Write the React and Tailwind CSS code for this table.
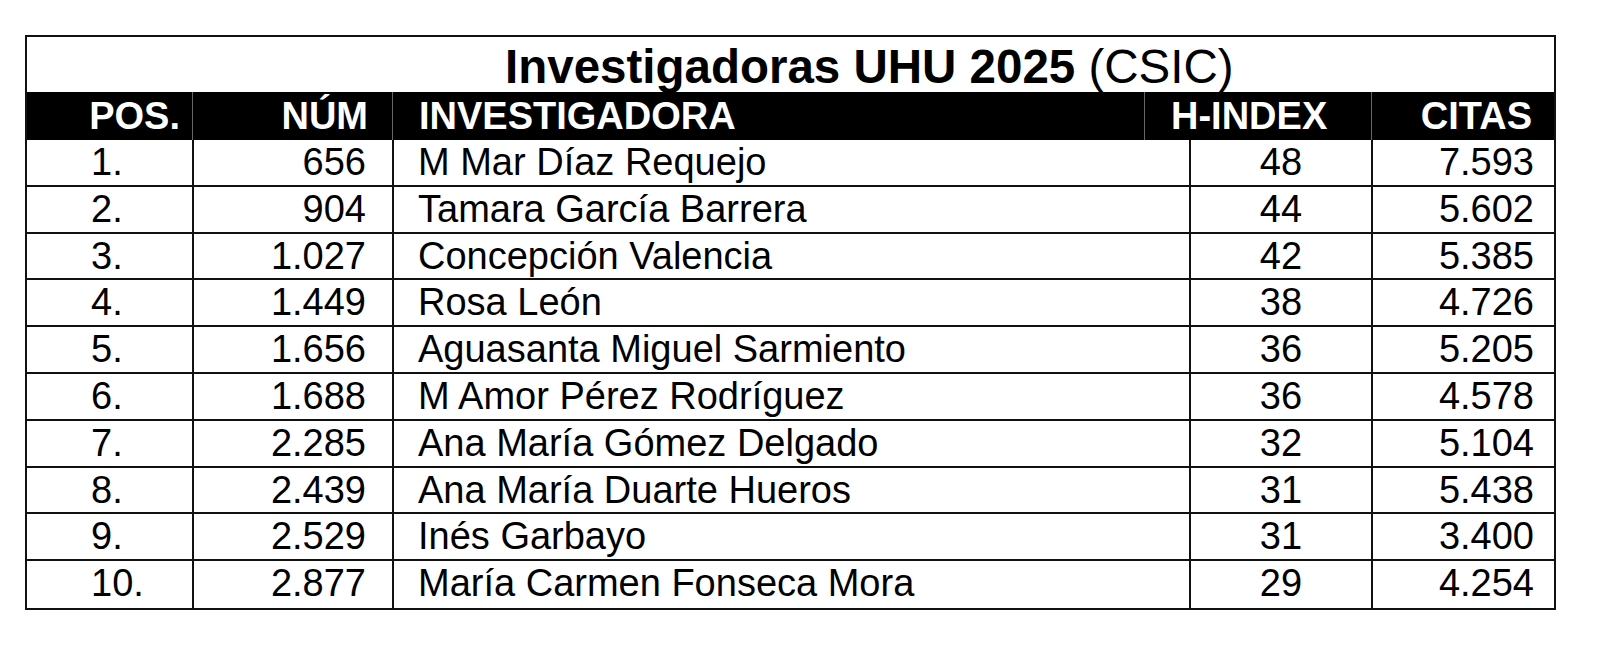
const rows = [
  ['1.', '656', 'M Mar Díaz Requejo', '48', '7.593'],
  ['2.', '904', 'Tamara García Barrera', '44', '5.602'],
  ['3.', '1.027', 'Concepción Valencia', '42', '5.385'],
  ['4.', '1.449', 'Rosa León', '38', '4.726'],
  ['5.', '1.656', 'Aguasanta Miguel Sarmiento', '36', '5.205'],
  ['6.', '1.688', 'M Amor Pérez Rodríguez', '36', '4.578'],
  ['7.', '2.285', 'Ana María Gómez Delgado', '32', '5.104'],
  ['8.', '2.439', 'Ana María Duarte Hueros', '31', '5.438'],
  ['9.', '2.529', 'Inés Garbayo', '31', '3.400'],
  ['10.', '2.877', 'María Carmen Fonseca Mora', '29', '4.254'],
];

function App() {
  return (
    <div className="h-[660px] w-[1600px] bg-white pl-[25px] pt-[35px] font-['Liberation_Sans',Arial,sans-serif] text-black">
      <div className="w-[1531px] border-2 border-[#111]">
        <div className="h-[55px] whitespace-nowrap pl-[478px] pt-[6px] text-[47.5px] leading-[47px]">
          <span className="font-bold">Investigadoras UHU 2025</span> (CSIC)
        </div>
        <div className="grid h-[48px] grid-cols-[165px_200px_752px_227px_1fr] bg-black text-[38px] font-bold leading-[48px] text-white">
          <div className="pr-[12px] text-right">POS.</div>
          <div className="border-l border-[#666] pr-[24px] text-right">NÚM</div>
          <div className="border-l border-[#666] pl-[26px]">INVESTIGADORA</div>
          <div className="border-l border-[#666] pl-[26px]">H-INDEX</div>
          <div className="border-l border-[#666] pr-[22px] text-right">CITAS</div>
        </div>
        {rows.map((r, i) => (
          <div
            key={r[0]}
            className={`grid h-[46.8px] grid-cols-[165px_200px_797px_182px_1fr] text-[38px] leading-[45px] ${
              i < rows.length - 1 ? 'border-b-2 border-[#111]' : ''
            }`}
          >
            <div className="pl-[64px]">{r[0]}</div>
            <div className="border-l-2 border-[#111] pr-[26px] text-right">{r[1]}</div>
            <div className="border-l-2 border-[#111] pl-[24px]">{r[2]}</div>
            <div className="border-l-2 border-[#111] text-center">{r[3]}</div>
            <div className="border-l-2 border-[#111] pr-[20px] text-right">{r[4]}</div>
          </div>
        ))}
      </div>
    </div>
  );
}

export default App;
